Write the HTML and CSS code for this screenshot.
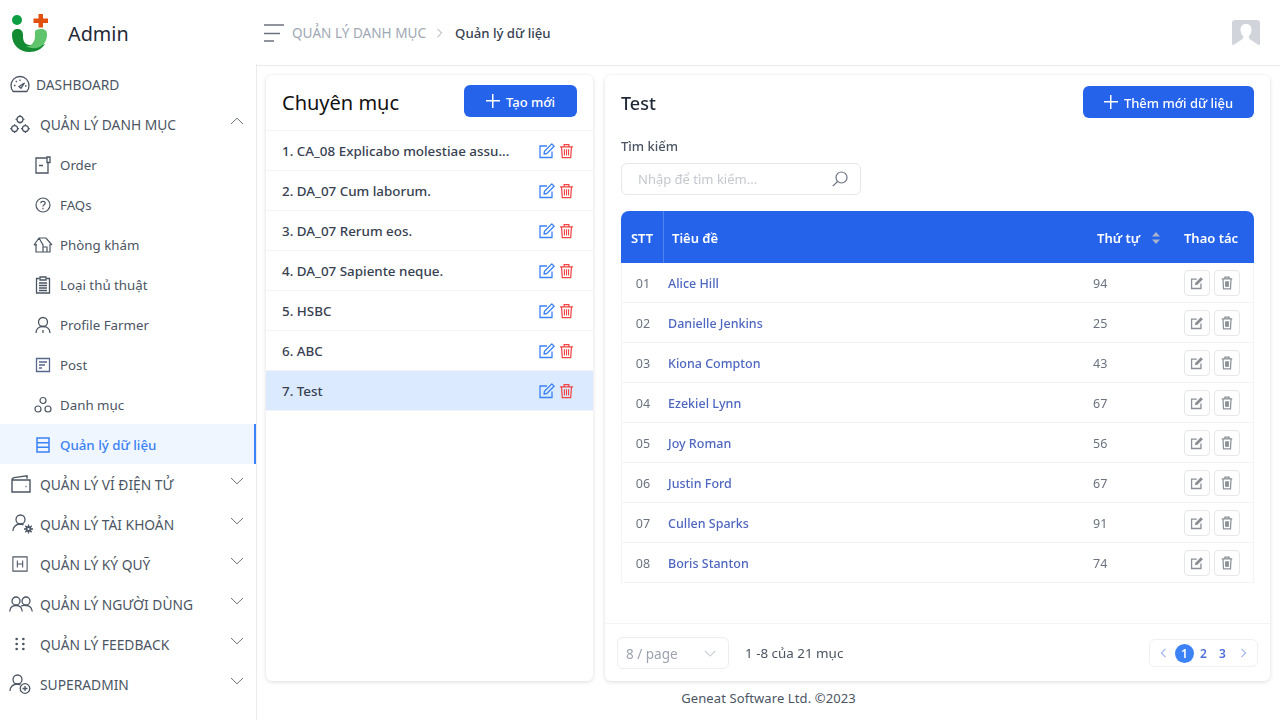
FILE: index.html
```html
<!DOCTYPE html>
<html lang="vi">
<head>
    <meta charset="UTF-8">
    <title>Quản lý dữ liệu</title>
    <link rel="stylesheet" href="styles.css">
</head>
<body>

<svg class="sprite" width="0" height="0">
    <symbol id="i-edit" viewBox="0 0 16 16"><path d="M13 8.5V14.5H1V3H8" fill="none" stroke="currentColor" stroke-width="1.3"/><path d="M5.5 8.2 12.8.9l2.3 2.3-7.3 7.3-2.8.5z" fill="none" stroke="currentColor" stroke-width="1.3" stroke-linejoin="round"/></symbol>
    <symbol id="i-trash" viewBox="0 0 16 16"><path d="M1 3.5h14M5.5 3.5V1.2h5v2.3M2.7 3.5l.8 11.5h9l.8-11.5" fill="none" stroke="currentColor" stroke-width="1.3"/><path d="M5.8 6v6.8M8 6v6.8M10.2 6v6.8" stroke="currentColor" stroke-width="1.2"/></symbol>
    <symbol id="i-edit-solid" viewBox="0 0 16 16"><path d="M12.5 8.5v5.8H1.8V3.5h6" fill="none" stroke="currentColor" stroke-width="1.5"/><path d="M5.5 10.6l.6-3 6.3-6.2 2.4 2.4-6.3 6.2z" fill="currentColor"/></symbol>
    <symbol id="i-trash-solid" viewBox="0 0 16 16"><path d="M2 3.2h12M5.6 3V1.3h4.8V3M3.4 3.4l.6 11.3h8l.6-11.3" fill="none" stroke="currentColor" stroke-width="1.4"/><rect x="5.8" y="6" width="4.4" height="6.4" fill="currentColor"/></symbol>
    <symbol id="i-gears" viewBox="0 0 24 24" fill="none" stroke="currentColor" stroke-width="1.5"><circle cx="12" cy="6.5" r="3.6"/><circle cx="5.5" cy="17.5" r="3.6"/><circle cx="18.5" cy="17.5" r="3.6"/><path d="M12 1.2v1.5M12 10.3v1.5M6.7 6.5h1.6M15.7 6.5h1.6M5.5 12.2v1.5M5.5 21.3v1.5M.2 17.5h1.6M9.2 17.5h1.6M18.5 12.2v1.5M18.5 21.3v1.5M13.2 17.5h1.6M22.2 17.5h1.6"/></symbol>
    <symbol id="i-chev" viewBox="0 0 14 8"><path d="M1 7 7 1.2 13 7" fill="none" stroke="currentColor" stroke-width="1"/></symbol>
</svg>

<aside class="sidebar">
    <div class="brand">
        <svg class="logo" viewBox="0 0 36 38" width="36" height="38">
            <circle cx="5" cy="6" r="5" fill="#0b9e43"/>
            <path d="M26.5 0h4.5v4.5h5v4.5h-5v4.5h-4.5V9h-5V4.500h5z" fill="#e2500f"/>
            <path d="M0 20.5C0 17 2.5 15 5.5 15S11 17 11 20.5V23C11 28 14 31 18 31L30 31 33 30C30 35 24 38 17.5 38 7.5 38 0 31 0 21Z" fill="#148a32"/>
            <path d="M23 17.5C23 16 25.5 15 29 15 33 15 35 17 35 20V21C35 27 31 33 24 34 21 34.500 17 34 14 32 19 33 23 28 23 22Z" fill="#5fc46c"/>
        </svg>
        <span class="brand-name">Admin</span>
    </div>
    <nav class="menu">
        <a class="menu-top">
            <svg class="ic ic-dash" viewBox="0 0 20 18" fill="none" stroke="currentColor" stroke-width="1.3"><path d="M3.2 16.5C1.8 15 1 13 1 10.5 1 5.5 5 1.5 10 1.5s9 4 9 9c0 2.5-.8 4.500-2.200 6z"/><path d="M9 11.500 14.500 8l-3.500 5.200zM4 10.500h1.500M15 11h1.500M10 4.500V6M5.800 6l1 1"/></svg>
            <span>DASHBOARD</span>
        </a>
        <a class="menu-top menu-group">
            <svg class="ic"><use href="#i-gears"/></svg>
            <span>QUẢN LÝ DANH MỤC</span>
            <svg class="chev"><use href="#i-chev"/></svg>
        </a>
        <a class="menu-sub">
            <svg class="ic-sub" viewBox="0 0 18 18" fill="none" stroke="currentColor" stroke-width="1.3"><path d="M13 2H2v15h12V7"/><path d="M13 1h3v5.5h-3zM5 9.5h4"/></svg>
            <span>Order</span>
        </a>
        <a class="menu-sub">
            <svg class="ic-sub" viewBox="0 0 18 18" fill="none" stroke="currentColor" stroke-width="1.2"><circle cx="9" cy="9" r="7"/><path d="M6.8 7.2C6.8 6 7.8 5.3 9 5.3s2.2.8 2.2 1.900c0 1.700-2.200 1.600-2.200 3.300M9 11.800v1.400"/></svg>
            <span>FAQs</span>
        </a>
        <a class="menu-sub">
            <svg class="ic-sub ic-house" viewBox="0 0 20 18" fill="none" stroke="currentColor" stroke-width="1.2"><path d="M1 9 6 2h7l6 7M3 8v8h14V8M6 2l4 7v7M10 16v-5h4v5M1 9h3"/></svg>
            <span>Phòng khám</span>
        </a>
        <a class="menu-sub">
            <svg class="ic-sub" viewBox="0 0 18 18" fill="none" stroke="currentColor" stroke-width="1.3"><path d="M5.5 2.5H2.5v14.5h13V2.5h-3"/><path d="M6 1h6v3H6zM5 7h8M5 9.5h8M5 12h8M5 14.500h8"/></svg>
            <span>Loại thủ thuật</span>
        </a>
        <a class="menu-sub">
            <svg class="ic-sub" viewBox="0 0 18 18" fill="none" stroke="currentColor" stroke-width="1.3"><circle cx="9" cy="6" r="4.5"/><path d="M2 17c0-4 3-6.5 7-6.5s7 2.5 7 6.5M9 14v3"/></svg>
            <span>Profile Farmer</span>
        </a>
        <a class="menu-sub">
            <svg class="ic-sub" viewBox="0 0 18 18" fill="none" stroke="#56688c" stroke-width="1.3"><path d="M2.5 2.5h13v13h-13zM5 6h8M5 9h6M5 12h3"/></svg>
            <span>Post</span>
        </a>
        <a class="menu-sub">
            <svg class="ic-sub" viewBox="0 0 18 18" fill="none" stroke="currentColor" stroke-width="1.2"><circle cx="9" cy="4.5" r="3"/><circle cx="4" cy="13" r="3"/><circle cx="14" cy="13" r="3"/></svg>
            <span>Danh mục</span>
        </a>
        <a class="menu-sub is-active">
            <svg class="ic-sub" viewBox="0 0 18 18" fill="none" stroke="currentColor" stroke-width="1.5"><path d="M3 2h12v14H3zM3 6.7h12M3 11.3h12"/></svg>
            <span>Quản lý dữ liệu</span>
        </a>
        <a class="menu-top menu-group">
            <svg class="ic ic-wallet" viewBox="0 0 20 18" fill="none" stroke="currentColor" stroke-width="1.4"><path d="M1 5c0-1 .5-2 2-2.400L16 .8v3M1 5h18v12H1zM14.500 11.500h1"/></svg>
            <span>QUẢN LÝ VÍ ĐIỆN TỬ</span>
            <svg class="chev chev-down"><use href="#i-chev"/></svg>
        </a>
        <a class="menu-top menu-group">
            <svg class="ic ic-acc" viewBox="0 0 22 20" fill="none" stroke="currentColor" stroke-width="1.3"><circle cx="8.5" cy="5.5" r="4.5"/><path d="M1 17c0-4 3-7 7-7 1.500 0 2.500.3 3.500 1"/><circle cx="16.5" cy="15" r="2" stroke-width="1.8"/><path d="M16.5 10.5v2M16.500 17.500v2M12 15h2M19 15h2M13.300 11.800l1.400 1.400M18.300 16.800l1.400 1.400M19.700 11.800l-1.400 1.400M14.700 16.800l-1.400 1.400"/></svg>
            <span>QUẢN LÝ TÀI KHOẢN</span>
            <svg class="chev chev-down"><use href="#i-chev"/></svg>
        </a>
        <a class="menu-top menu-group">
            <svg class="ic ic-box" viewBox="0 0 18 18" fill="none" stroke="currentColor" stroke-width="1.2"><path d="M1 1h16v16H1zM6 5v8M12 5v8M6 9h6"/></svg>
            <span>QUẢN LÝ KÝ QUỸ</span>
            <svg class="chev chev-down"><use href="#i-chev"/></svg>
        </a>
        <a class="menu-top menu-group">
            <svg class="ic ic-users" viewBox="0 0 24 16" fill="none" stroke="currentColor" stroke-width="1.3"><circle cx="7" cy="5" r="4"/><circle cx="17" cy="5" r="4"/><path d="M.7 15.500C1 11.500 3.500 9.500 7 9.500s6 2 6.300 6M12 10c1.300-.5 3-.7 5-.5 3.500 0 5.800 2.500 6.300 6"/></svg>
            <span>QUẢN LÝ NGƯỜI DÙNG</span>
            <svg class="chev chev-down"><use href="#i-chev"/></svg>
        </a>
        <a class="menu-top menu-group">
            <svg class="ic ic-dots" viewBox="0 0 12 16" fill="currentColor"><circle cx="2" cy="2" r="1.6"/><circle cx="10" cy="2" r="1.6"/><circle cx="2" cy="8" r="1.6"/><circle cx="10" cy="8" r="1.6"/><circle cx="2" cy="14" r="1.6"/><circle cx="10" cy="14" r="1.6"/></svg>
            <span>QUẢN LÝ FEEDBACK</span>
            <svg class="chev chev-down"><use href="#i-chev"/></svg>
        </a>
        <a class="menu-top menu-group">
            <svg class="ic ic-super" viewBox="0 0 22 20" fill="none" stroke="currentColor" stroke-width="1.3"><circle cx="8.5" cy="5.5" r="4.5"/><path d="M1 17c0-4 3-7 7-7 1.500 0 2.500.3 3.500 1"/><circle cx="16" cy="14.5" r="4.8"/><path d="M16 12v5M13.500 14.500h5"/></svg>
            <span>SUPERADMIN</span>
            <svg class="chev chev-down"><use href="#i-chev"/></svg>
        </a>
    </nav>
</aside>

<div class="main">
    <header class="topbar">
        <svg class="burger" viewBox="0 0 20 18" width="20" height="18" fill="none" stroke="#6b7280" stroke-width="1.5"><path d="M0 1h20M0 9.5h16M0 17h10"/></svg>
        <span class="crumb">QUẢN LÝ DANH MỤC</span>
        <svg class="crumb-sep" viewBox="0 0 8 12" width="7" height="10" fill="none" stroke="#9ca3af" stroke-width="1.2"><path d="M1.5 1 6.5 6l-5 5"/></svg>
        <span class="crumb-now">Quản lý dữ liệu</span>
        <div class="avatar">
            <svg viewBox="0 0 28 26" width="28" height="26"><rect width="28" height="26" rx="3" fill="#d1d5db"/><path d="M0 26 9 20C11 19 11.5 17.5 11 16 9.5 14.5 8.5 12 8.5 9.5 8.5 6 11 4 14 4S19.5 6 19.5 9.5C19.5 12 18.5 14.5 17 16 16.5 17.5 17 19 19 20L28 26Z" fill="#fff"/></svg>
        </div>
    </header>

    <div class="content">
        <section class="card cat-card">
            <div class="cat-head">
                <h2>Chuyên mục</h2>
                <button class="btn btn-cat"><span class="plus"></span>Tạo mới</button>
            </div>
            <ul class="cat-list">
                <li><span class="cat-name">1. CA_08 Explicabo molestiae assu...</span><svg class="i-blue"><use href="#i-edit"/></svg><svg class="i-red"><use href="#i-trash"/></svg></li>
                <li><span class="cat-name">2. DA_07 Cum laborum.</span><svg class="i-blue"><use href="#i-edit"/></svg><svg class="i-red"><use href="#i-trash"/></svg></li>
                <li><span class="cat-name">3. DA_07 Rerum eos.</span><svg class="i-blue"><use href="#i-edit"/></svg><svg class="i-red"><use href="#i-trash"/></svg></li>
                <li><span class="cat-name">4. DA_07 Sapiente neque.</span><svg class="i-blue"><use href="#i-edit"/></svg><svg class="i-red"><use href="#i-trash"/></svg></li>
                <li><span class="cat-name">5. HSBC</span><svg class="i-blue"><use href="#i-edit"/></svg><svg class="i-red"><use href="#i-trash"/></svg></li>
                <li><span class="cat-name">6. ABC</span><svg class="i-blue"><use href="#i-edit"/></svg><svg class="i-red"><use href="#i-trash"/></svg></li>
                <li class="selected"><span class="cat-name">7. Test</span><svg class="i-blue"><use href="#i-edit"/></svg><svg class="i-red"><use href="#i-trash"/></svg></li>
            </ul>
        </section>

        <section class="card data-card">
            <div class="data-body">
                <div class="data-head">
                    <h2>Test</h2>
                    <button class="btn btn-add"><span class="plus"></span>Thêm mới dữ liệu</button>
                </div>
                <label class="search-label">Tìm kiếm</label>
                <div class="search">
                    <span>Nhập để tìm kiếm...</span>
                    <svg viewBox="0 0 16 16" width="16" height="16" fill="none" stroke="#6b7280" stroke-width="1.2"><circle cx="9.5" cy="6.5" r="5.5"/><path d="M5.5 10.5.8 15.2"/></svg>
                </div>
                <table class="grid">
                    <thead>
                        <tr>
                            <th class="c-stt">STT</th>
                            <th class="c-title">Tiêu đề</th>
                            <th class="c-order">Thứ tự <svg class="sort" viewBox="0 0 8 12" width="8" height="12" fill="#a9b4c8"><path d="M4 0l4 4.5H0zM4 12 0 7.5h8z"/></svg></th>
                            <th class="c-act">Thao tác</th>
                        </tr>
                    </thead>
                    <tbody>
                        <tr><td class="c-stt">01</td><td class="c-title"><a>Alice Hill</a></td><td class="c-order">94</td><td class="c-act"><span class="act"><svg><use href="#i-edit-solid"/></svg></span><span class="act"><svg><use href="#i-trash-solid"/></svg></span></td></tr>
                        <tr><td class="c-stt">02</td><td class="c-title"><a>Danielle Jenkins</a></td><td class="c-order">25</td><td class="c-act"><span class="act"><svg><use href="#i-edit-solid"/></svg></span><span class="act"><svg><use href="#i-trash-solid"/></svg></span></td></tr>
                        <tr><td class="c-stt">03</td><td class="c-title"><a>Kiona Compton</a></td><td class="c-order">43</td><td class="c-act"><span class="act"><svg><use href="#i-edit-solid"/></svg></span><span class="act"><svg><use href="#i-trash-solid"/></svg></span></td></tr>
                        <tr><td class="c-stt">04</td><td class="c-title"><a>Ezekiel Lynn</a></td><td class="c-order">67</td><td class="c-act"><span class="act"><svg><use href="#i-edit-solid"/></svg></span><span class="act"><svg><use href="#i-trash-solid"/></svg></span></td></tr>
                        <tr><td class="c-stt">05</td><td class="c-title"><a>Joy Roman</a></td><td class="c-order">56</td><td class="c-act"><span class="act"><svg><use href="#i-edit-solid"/></svg></span><span class="act"><svg><use href="#i-trash-solid"/></svg></span></td></tr>
                        <tr><td class="c-stt">06</td><td class="c-title"><a>Justin Ford</a></td><td class="c-order">67</td><td class="c-act"><span class="act"><svg><use href="#i-edit-solid"/></svg></span><span class="act"><svg><use href="#i-trash-solid"/></svg></span></td></tr>
                        <tr><td class="c-stt">07</td><td class="c-title"><a>Cullen Sparks</a></td><td class="c-order">91</td><td class="c-act"><span class="act"><svg><use href="#i-edit-solid"/></svg></span><span class="act"><svg><use href="#i-trash-solid"/></svg></span></td></tr>
                        <tr><td class="c-stt">08</td><td class="c-title"><a>Boris Stanton</a></td><td class="c-order">74</td><td class="c-act"><span class="act"><svg><use href="#i-edit-solid"/></svg></span><span class="act"><svg><use href="#i-trash-solid"/></svg></span></td></tr>
                    </tbody>
                </table>
            </div>
            <div class="pager">
                <div class="page-size">
                    <span>8 / page</span>
                    <svg class="chev-size" viewBox="0 0 14 8" width="12" height="7" fill="none" stroke="#c3c8d0" stroke-width="1.2"><path d="M1 1l6 6 6-6"/></svg>
                </div>
                <span class="page-info">1 -8 của 21 mục</span>
                <div class="pages">
                    <svg viewBox="0 0 8 12" width="7" height="10" fill="none" stroke="#a5b8f0" stroke-width="1.5"><path d="M6.5 1l-5 5 5 5"/></svg>
                    <span class="page on">1</span>
                    <span class="page">2</span>
                    <span class="page">3</span>
                    <svg viewBox="0 0 8 12" width="7" height="10" fill="none" stroke="#a5b8f0" stroke-width="1.5"><path d="M1.5 1l5 5-5 5"/></svg>
                </div>
            </div>
        </section>
    </div>
    <footer class="foot">Geneat Software Ltd. ©2023</footer>
</div>

</body>
</html>
```

FILE: styles.css
```css
* {
    box-sizing: border-box;
}

body {
    font-family: "Noto Sans", "Noto Sans CJK SC", sans-serif;
    font-size: 14px;
    margin: 0;
    display: flex;
    height: 720px;
    overflow: hidden;
    background-color: #fff;
    color: #4b5563;
}

.sprite {
    position: absolute;
}

/* sidebar */
.sidebar {
    width: 257px;
    flex: none;
    border-right: 1px solid #e9ebee;
}

.brand {
    height: 64px;
    display: flex;
    align-items: center;
    padding: 2px 0 0 12px;
    margin-right: -1px;
    background-color: #fff;
    position: relative;
}

.brand-name {
    font-size: 19.8px;
    color: #1f2937;
    margin-left: 20px;
}

.menu a {
    display: flex;
    align-items: center;
    height: 40px;
    position: relative;
}

.menu-top {
    padding-left: 10px;
    color: #4b5563;
    font-size: 13.8px;
}

.menu-top .ic {
    width: 20px;
    height: 20px;
    margin-right: 10px;
    flex: none;
}

.menu-top .ic-dash {
    height: 18px;
    margin-right: 6px;
}

.menu-top .ic-wallet {
    height: 18px;
    margin-left: 1px;
    margin-right: 9px;
}

.menu-top .ic-acc {
    width: 22px;
    margin-left: 2px;
    margin-right: 6px;
}

.menu-top .ic-super {
    width: 22px;
    margin-left: -1px;
    margin-right: 9px;
}

.menu-top .ic-box {
    width: 16px;
    height: 16px;
    margin-left: 2px;
    margin-right: 12px;
}

.menu-top .ic-users {
    width: 24px;
    height: 16px;
    margin: 0 7px 0 -1px;
}

.menu-top .ic-dots {
    width: 10px;
    height: 14px;
    margin: 0 15px 0 5px;
}

.chev {
    position: absolute;
    right: 12px;
    top: 13px;
    width: 14px;
    height: 8px;
    color: #6b7280;
}

.chev-down {
    transform: rotate(180deg);
}

.menu-sub {
    padding: 2px 0 0 34px;
    color: #4b5563;
    font-size: 13.3px;
}

.ic-sub {
    width: 18px;
    height: 18px;
    margin-right: 8px;
    flex: none;
}

.ic-house {
    width: 20px;
    margin: 0 7px 0 -1px;
}

.menu-sub.is-active {
    background-color: #eff6ff;
    border-right: 2px solid #3b82f6;
    color: #3b82f6;
    font-weight: 500;
}

/* main */
.main {
    flex: 1;
    min-width: 0;
    display: flex;
    flex-direction: column;
}

.topbar {
    height: 66px;
    flex: none;
    display: flex;
    align-items: center;
    padding: 0 20px 0 7px;
    border-bottom: 1px solid #e9ebee;
}

.burger {
    margin-right: 8px;
}

.crumb {
    font-size: 13.6px;
    color: #a0a8b4;
}

.crumb-sep {
    margin: 0 12px 0 10px;
}

.crumb-now {
    font-size: 13.2px;
    font-weight: 500;
    color: #374151;
}

.avatar {
    margin-left: auto;
    height: 26px;
    filter: blur(0.4px);
}

.content {
    flex: none;
    display: flex;
    gap: 12px;
    padding: 9px 10px 0 9px;
    height: 615px;
}

.card {
    background-color: #fff;
    border-radius: 6px;
    box-shadow: 0 1px 4px rgba(0, 0, 0, 0.14);
}

.cat-card {
    width: 327px;
    flex: none;
}

.cat-head {
    height: 56px;
    display: flex;
    align-items: center;
    justify-content: space-between;
    padding: 0 16px 3px;
    border-bottom: 1px solid #f3f4f6;
}

.cat-head h2 {
    font-size: 20px;
    font-weight: 400;
    color: #111;
    margin: 3px 0 0;
}

.btn {
    display: flex;
    align-items: center;
    justify-content: center;
    height: 32px;
    padding: 1px 0 0;
    border: none;
    border-radius: 6px;
    background-color: #2563eb;
    color: #fff;
    font-family: inherit;
    font-size: 13px;
    font-weight: 500;
}

.btn-cat {
    width: 113px;
}

.btn-add {
    width: 171px;
}

.plus {
    width: 14px;
    height: 14px;
    margin: -2px 6px 0 0;
    background:
        linear-gradient(#fff, #fff) center / 100% 1.5px no-repeat,
        linear-gradient(#fff, #fff) center / 1.5px 100% no-repeat;
}

.cat-list {
    list-style: none;
    margin: 0;
    padding: 0;
}

.cat-list li {
    height: 40px;
    display: flex;
    align-items: center;
    padding: 0 19px 0 16px;
    border-bottom: 1px solid #f3f4f6;
}

.cat-list li.selected {
    background-color: #dbeafe;
}

.cat-name {
    flex: 1;
    color: #374151;
    font-size: 13.4px;
    font-weight: 500;
}

.i-blue {
    width: 16px;
    height: 16px;
    color: #3b82f6;
    margin-right: 4px;
}

.i-red {
    width: 15px;
    height: 16px;
    color: #ef4444;
}

.data-card {
    flex: 1;
    min-width: 0;
    display: flex;
    flex-direction: column;
    filter: blur(0.4px);
}

.data-body {
    flex: 1;
    padding: 11px 16px 0;
}

.data-head {
    display: flex;
    align-items: center;
    justify-content: space-between;
    height: 32px;
    margin-bottom: 19px;
}

.data-head h2 {
    margin: 1px 0 0;
    font-size: 18px;
    font-weight: 500;
    color: #1f2937;
}

.search-label {
    display: block;
    font-size: 13px;
    font-weight: 500;
    color: #4b5563;
    line-height: 18px;
    margin-bottom: 8px;
}

.search {
    width: 240px;
    height: 32px;
    display: flex;
    align-items: center;
    justify-content: space-between;
    padding: 0 12px 0 16px;
    border: 1px solid #e5e7eb;
    border-radius: 6px;
    font-size: 13px;
    color: #c4c8ce;
    margin-bottom: 16px;
}

.grid {
    width: 100%;
    border-collapse: separate;
    border-spacing: 0;
    table-layout: fixed;
    font-size: 12.5px;
}

.grid th {
    height: 52px;
    background-color: #2563eb;
    color: #fff;
    font-weight: 600;
    font-size: 13px;
    text-align: left;
    padding: 2px 8px 0;
}

.grid th:first-child {
    border-top-left-radius: 8px;
    border-right: 1px solid #4f83f0;
    text-align: center;
}

.grid th:last-child {
    border-top-right-radius: 8px;
    text-align: center;
}

.grid td {
    height: 40px;
    padding: 2px 4px 0;
    border-bottom: 1px solid #f3f4f6;
    color: #6b7280;
}

.grid td:first-child {
    border-left: 1px solid #f3f4f6;
    text-align: center;
}

.grid td:last-child {
    border-right: 1px solid #f3f4f6;
}

.c-stt {
    width: 43px;
}

.c-order {
    width: 90px;
}

.c-act {
    width: 86px;
}

.grid th.c-order {
    padding-left: 19px;
    white-space: nowrap;
}

.sort {
    margin-left: 8px;
    vertical-align: -1px;
}

.grid td.c-order {
    padding-left: 15px;
}

.grid a {
    color: #4f67c0;
    font-weight: 500;
}

.grid td.c-act {
    text-align: left;
    padding: 0 0 0 16px;
    white-space: nowrap;
}

.act {
    display: inline-flex;
    align-items: center;
    justify-content: center;
    width: 26px;
    height: 26px;
    border: 1px solid #e5e7eb;
    border-radius: 4px;
    margin-right: 4px;
    vertical-align: middle;
    color: #8b9096;
}

.act svg {
    width: 14px;
    height: 14px;
}

.pager {
    height: 58px;
    flex: none;
    display: flex;
    align-items: center;
    padding: 1px 12px 0;
    border-top: 1px solid #f3f4f6;
}

.page-size {
    width: 112px;
    height: 32px;
    display: flex;
    align-items: center;
    justify-content: space-between;
    padding: 1px 12px 0 8px;
    border: 1px solid #eceef1;
    border-radius: 6px;
    color: #9ca3af;
    font-size: 13.5px;
}

.page-info {
    margin-left: 16px;
    font-size: 13.4px;
    color: #4b5563;
}

.pages {
    margin-left: auto;
    height: 28px;
    display: flex;
    align-items: center;
    padding: 0 10px;
    border: 1px solid #eef0f3;
    border-radius: 6px;
}

.page {
    width: 19px;
    height: 19px;
    border-radius: 50%;
    display: flex;
    align-items: center;
    justify-content: center;
    font-size: 12px;
    font-weight: 600;
    color: #4f6fdc;
}

.page.on {
    background-color: #3b82f6;
    color: #fff;
    margin-left: 8px;
}

.pages svg:last-child {
    margin-left: 8px;
}

.foot {
    text-align: center;
    font-size: 13px;
    line-height: 18px;
    margin-top: 8px;
    color: #4b5563;
    letter-spacing: 0.1px;
}
```
